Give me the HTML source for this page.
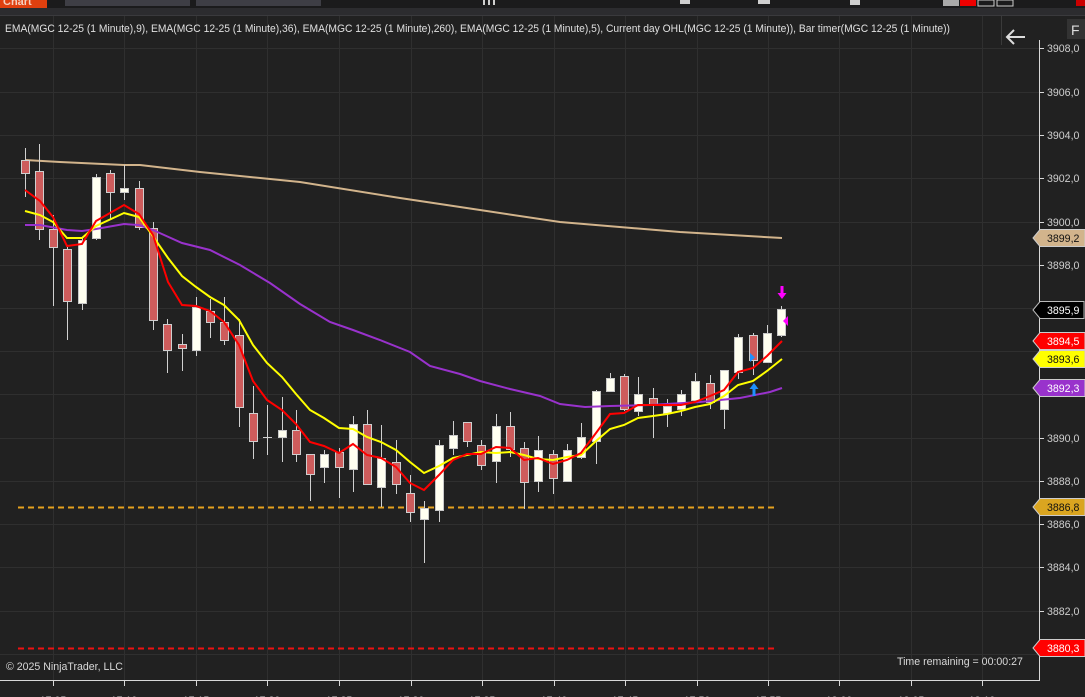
<!DOCTYPE html>
<html><head><meta charset="utf-8"><style>
html,body{margin:0;padding:0;background:#212121;overflow:hidden}
svg{display:block}
text{font-family:"Liberation Sans",sans-serif}
</style></head><body>
<svg width="1085" height="697" viewBox="0 0 1085 697" xmlns="http://www.w3.org/2000/svg">
<rect width="1085" height="697" fill="#212121"/>
<rect x="0" y="0" width="1085" height="8" fill="#1b1b1c"/>
<rect x="0" y="8" width="1085" height="7" fill="#2c2c2f"/>
<rect x="0" y="15" width="1085" height="1" fill="#3a3a3d"/>
<rect x="0" y="0" width="47" height="8" fill="#e0400f"/>
<text x="3" y="5" font-size="11" fill="#f4d0c0" font-weight="bold">Chart</text>
<rect x="65" y="0" width="125" height="6" fill="#3e3e45"/>
<rect x="196" y="0" width="125" height="6" fill="#3e3e45"/>
<g fill="#cfcfcf">
<rect x="483" y="0" width="2" height="5"/><rect x="488" y="0" width="2" height="5"/><rect x="493" y="0" width="2" height="5"/>
<rect x="680" y="0" width="10" height="4"/><rect x="758" y="0" width="12" height="4"/><rect x="850" y="0" width="10" height="5"/>
</g>
<rect x="943" y="0" width="16" height="6" fill="#aaa"/>
<rect x="960" y="0" width="16" height="6" fill="#e00"/>
<rect x="978" y="0" width="16" height="6" fill="none" stroke="#ccc"/>
<rect x="997" y="0" width="16" height="6" fill="none" stroke="#ccc"/>
<rect x="1076" y="0" width="9" height="6" fill="#c00"/>
<g stroke="#2f2f2f" stroke-width="1">
<line x1="53.5" y1="16" x2="53.5" y2="680"/><line x1="124.5" y1="16" x2="124.5" y2="680"/>
<line x1="196.5" y1="16" x2="196.5" y2="680"/><line x1="267.5" y1="16" x2="267.5" y2="680"/>
<line x1="339.5" y1="16" x2="339.5" y2="680"/><line x1="411.5" y1="16" x2="411.5" y2="680"/>
<line x1="482.5" y1="16" x2="482.5" y2="680"/><line x1="554.5" y1="16" x2="554.5" y2="680"/>
<line x1="625.5" y1="16" x2="625.5" y2="680"/><line x1="697.5" y1="16" x2="697.5" y2="680"/>
<line x1="768.5" y1="16" x2="768.5" y2="680"/><line x1="839.5" y1="16" x2="839.5" y2="680"/>
<line x1="911.5" y1="16" x2="911.5" y2="680"/><line x1="982.5" y1="16" x2="982.5" y2="680"/>
<line x1="0" y1="48.5" x2="1039" y2="48.5"/><line x1="0" y1="92.5" x2="1039" y2="92.5"/>
<line x1="0" y1="135.5" x2="1039" y2="135.5"/><line x1="0" y1="178.5" x2="1039" y2="178.5"/>
<line x1="0" y1="222.5" x2="1039" y2="222.5"/><line x1="0" y1="265.5" x2="1039" y2="265.5"/>
<line x1="0" y1="308.5" x2="1039" y2="308.5"/><line x1="0" y1="351.5" x2="1039" y2="351.5"/>
<line x1="0" y1="394.5" x2="1039" y2="394.5"/><line x1="0" y1="438.5" x2="1039" y2="438.5"/>
<line x1="0" y1="481.5" x2="1039" y2="481.5"/><line x1="0" y1="524.5" x2="1039" y2="524.5"/>
<line x1="0" y1="567.5" x2="1039" y2="567.5"/><line x1="0" y1="611.5" x2="1039" y2="611.5"/>
<line x1="0" y1="654.5" x2="1039" y2="654.5"/>
</g>
<line x1="1001.5" y1="16" x2="1001.5" y2="45" stroke="#3a3a3a"/>
<text x="5" y="32" font-size="10.6" fill="#e0e0e0" textLength="945" lengthAdjust="spacingAndGlyphs">EMA(MGC 12-25 (1 Minute),9), EMA(MGC 12-25 (1 Minute),36), EMA(MGC 12-25 (1 Minute),260), EMA(MGC 12-25 (1 Minute),5), Current day OHL(MGC 12-25 (1 Minute)), Bar timer(MGC 12-25 (1 Minute))</text>
<path d="M1007 37 H1025 M1014 30 L1007 37 L1014 44" stroke="#ddd" stroke-width="2" fill="none"/>
<rect x="1067" y="19" width="18" height="20" fill="#333"/>
<text x="1071" y="35" font-size="14" fill="#ddd">F</text>
<polyline fill="none" stroke="#d2b48c" stroke-width="2" points="25,160 60,162 124,165 140,165 200,172 300,182 400,198 480,210 560,222 680,232 782,238"/>
<line x1="18" y1="507.5" x2="776" y2="507.5" stroke="#e5a11e" stroke-width="2" stroke-dasharray="6,4"/>
<line x1="18" y1="648.5" x2="776" y2="648.5" stroke="#ee1111" stroke-width="2" stroke-dasharray="6,4"/>
<g stroke="#d0d0d0" stroke-width="1">
<g>
<line x1="25.5" y1="148" x2="25.5" y2="197"/><line x1="39.5" y1="144" x2="39.5" y2="240"/>
<line x1="53.5" y1="215" x2="53.5" y2="306"/><line x1="67.5" y1="247" x2="67.5" y2="340"/>
<line x1="82.5" y1="237" x2="82.5" y2="310"/><line x1="96.5" y1="174" x2="96.5" y2="240"/>
<line x1="110.5" y1="170" x2="110.5" y2="220"/><line x1="124.5" y1="165" x2="124.5" y2="200"/>
<line x1="139.5" y1="181" x2="139.5" y2="230"/><line x1="153.5" y1="222" x2="153.5" y2="330"/>
<line x1="167.5" y1="319" x2="167.5" y2="373"/><line x1="182.5" y1="334" x2="182.5" y2="371"/>
<line x1="196.5" y1="297" x2="196.5" y2="356"/><line x1="210.5" y1="299" x2="210.5" y2="338"/>
<line x1="224.5" y1="297" x2="224.5" y2="345"/><line x1="239.5" y1="319" x2="239.5" y2="427"/>
<line x1="253.5" y1="386" x2="253.5" y2="459"/><line x1="267.5" y1="405" x2="267.5" y2="455"/>
<line x1="282.5" y1="397" x2="282.5" y2="462"/><line x1="296.5" y1="410" x2="296.5" y2="462"/>
<line x1="310.5" y1="454" x2="310.5" y2="501"/><line x1="324.5" y1="450" x2="324.5" y2="483"/>
<line x1="339.5" y1="448" x2="339.5" y2="498"/><line x1="353.5" y1="416" x2="353.5" y2="492"/>
<line x1="367.5" y1="410" x2="367.5" y2="484"/><line x1="381.5" y1="425" x2="381.5" y2="507"/>
<line x1="396.5" y1="440" x2="396.5" y2="494"/><line x1="410.5" y1="475" x2="410.5" y2="522"/>
<line x1="424.5" y1="501" x2="424.5" y2="563"/><line x1="439.5" y1="440" x2="439.5" y2="522"/>
<line x1="453.5" y1="421" x2="453.5" y2="455"/><line x1="467.5" y1="422" x2="467.5" y2="447"/>
<line x1="481.5" y1="440" x2="481.5" y2="470"/><line x1="496.5" y1="414" x2="496.5" y2="483"/>
<line x1="510.5" y1="412" x2="510.5" y2="457"/><line x1="524.5" y1="442" x2="524.5" y2="509"/>
<line x1="538.5" y1="436" x2="538.5" y2="492"/><line x1="553.5" y1="450" x2="553.5" y2="494"/>
<line x1="567.5" y1="444" x2="567.5" y2="481"/><line x1="581.5" y1="423" x2="581.5" y2="459"/>
<line x1="596.5" y1="390" x2="596.5" y2="464"/><line x1="610.5" y1="373" x2="610.5" y2="391"/>
<line x1="624.5" y1="374" x2="624.5" y2="411"/><line x1="638.5" y1="377" x2="638.5" y2="416"/>
<line x1="653.5" y1="388" x2="653.5" y2="438"/><line x1="667.5" y1="399" x2="667.5" y2="427"/>
<line x1="681.5" y1="390" x2="681.5" y2="416"/><line x1="695.5" y1="373" x2="695.5" y2="400"/>
<line x1="710.5" y1="375" x2="710.5" y2="409"/><line x1="724.5" y1="370" x2="724.5" y2="429"/>
<line x1="738.5" y1="334" x2="738.5" y2="379"/><line x1="753.5" y1="333" x2="753.5" y2="375"/>
<line x1="767.5" y1="325" x2="767.5" y2="362"/><line x1="781.5" y1="306" x2="781.5" y2="337"/>
</g>
<g fill="#cd5c5c" stroke="#cfcfcf">
<rect x="21.5" y="160.5" width="8" height="13"/><rect x="35.5" y="171.5" width="8" height="58"/>
<rect x="49.5" y="229.5" width="8" height="18"/><rect x="63.5" y="249.5" width="8" height="52"/>
<rect x="106.5" y="173.5" width="8" height="19"/><rect x="135.5" y="188.5" width="8" height="39"/>
<rect x="149.5" y="228.5" width="8" height="92"/><rect x="163.5" y="324.5" width="8" height="26"/>
<rect x="178.5" y="344.5" width="8" height="4"/><rect x="206.5" y="311.5" width="8" height="11"/>
<rect x="220.5" y="322.5" width="8" height="18"/><rect x="235.5" y="335.5" width="8" height="72"/>
<rect x="249.5" y="413.5" width="8" height="28"/><rect x="292.5" y="430.5" width="8" height="24"/>
<rect x="306.5" y="454.5" width="8" height="20"/><rect x="335.5" y="452.5" width="8" height="15"/>
<rect x="363.5" y="424.5" width="8" height="60"/><rect x="392.5" y="462.5" width="8" height="22"/>
<rect x="406.5" y="493.5" width="8" height="19"/><rect x="463.5" y="422.5" width="8" height="19"/>
<rect x="477.5" y="445.5" width="8" height="20"/><rect x="506.5" y="426.5" width="8" height="23"/>
<rect x="520.5" y="448.5" width="8" height="34"/><rect x="549.5" y="454.5" width="8" height="24"/>
<rect x="620.5" y="376.5" width="8" height="33"/><rect x="649.5" y="398.5" width="8" height="7"/>
<rect x="706.5" y="383.5" width="8" height="19"/><rect x="749.5" y="335.5" width="8" height="25"/>
</g>
<g fill="#fffff0" stroke="#c8c8c8">
<rect x="78.5" y="240.5" width="8" height="63"/><rect x="92.5" y="177.5" width="8" height="61"/>
<rect x="120.5" y="188.5" width="8" height="4"/><rect x="192.5" y="307.5" width="8" height="43"/>
<rect x="278.5" y="430.5" width="8" height="7"/><rect x="320.5" y="454.5" width="8" height="13"/>
<rect x="349.5" y="424.5" width="8" height="45"/><rect x="377.5" y="458.5" width="8" height="29"/>
<rect x="420.5" y="508.5" width="8" height="11"/><rect x="435.5" y="445.5" width="8" height="65"/>
<rect x="449.5" y="435.5" width="8" height="13"/><rect x="492.5" y="426.5" width="8" height="35"/>
<rect x="534.5" y="450.5" width="8" height="31"/><rect x="563.5" y="450.5" width="8" height="31"/>
<rect x="577.5" y="437.5" width="8" height="20"/><rect x="592.5" y="391.5" width="8" height="50"/>
<rect x="606.5" y="378.5" width="8" height="13"/><rect x="634.5" y="394.5" width="8" height="17"/>
<rect x="663.5" y="406.5" width="8" height="7"/><rect x="677.5" y="394.5" width="8" height="15"/>
<rect x="691.5" y="381.5" width="8" height="19"/><rect x="720.5" y="370.5" width="8" height="39"/>
<rect x="734.5" y="337.5" width="8" height="35"/><rect x="763.5" y="333.5" width="8" height="29"/>
<rect x="777.5" y="309.5" width="8" height="26"/>
</g>
<line x1="263" y1="437.5" x2="272" y2="437.5"/>
</g>
<polyline fill="none" stroke="#9932cc" stroke-width="2" points="25,225 40,225 67,230 82,231 96,229 124,224 139,225 153,230 182,243 210,250 240,265 270,283 300,304 330,322 353,330 380,340 410,352 430,366 460,374 480,381 510,389 540,396 560,404 585,407 610,406 650,405 700,402 740,398 770,392 782,388"/>
<polyline fill="none" stroke="#ffff00" stroke-width="2" points="25,211 40,215 53,222 67,238 82,238 96,226 124,213 139,217 150,232 168,258 182,276 196,287 210,297 224,305 239,320 253,345 267,363 282,377 296,394 310,410 324,418 339,428 353,429 367,437 381,442 396,450 410,462 424,473 439,466 453,458 467,455 481,452 496,453 510,452 524,455 538,459 553,460 567,457 581,455 596,441 610,429 624,425 638,418 653,416 667,414 681,411 695,407 710,404 724,396 738,385 753,381 767,371 782,359"/>
<polyline fill="none" stroke="#ff0000" stroke-width="2" points="25,190 40,201 53,217 67,246 82,244 96,221 124,205 139,214 153,235 168,282 182,305 196,306 210,311 224,322 239,345 253,381 267,400 282,410 296,424 310,442 324,446 339,453 353,444 367,455 381,458 396,467 410,483 424,490 439,475 453,460 467,454 481,454 496,447 510,448 524,460 538,458 553,464 567,460 581,453 596,433 610,414 624,413 638,405 653,405 667,405 681,405 695,402 710,396 724,390 738,372 753,368 767,356 782,341"/>
<path d="M780.5 286 h3 v7 h3 l-4.5 6 l-4.5 -6 h3 z" fill="#ff00ff"/>
<path d="M788 316 v10 l-5 -5 z" fill="#ff00ff"/>
<path d="M752.5 396 v-7 h-3 l4.5 -6 l4.5 6 h-3 v7 z" fill="#1e90ff"/>
<path d="M750 353 l5 4.5 l-5 4.5 z" fill="#1e90ff"/>
<line x1="1039.5" y1="40" x2="1039.5" y2="681" stroke="#d8d8d8"/>
<line x1="0" y1="680.5" x2="1040" y2="680.5" stroke="#d8d8d8"/>
<g stroke="#d8d8d8">
<line x1="1040" y1="48.5" x2="1044" y2="48.5"/><line x1="1040" y1="92.5" x2="1044" y2="92.5"/>
<line x1="1040" y1="135.5" x2="1044" y2="135.5"/><line x1="1040" y1="178.5" x2="1044" y2="178.5"/>
<line x1="1040" y1="222.5" x2="1044" y2="222.5"/><line x1="1040" y1="265.5" x2="1044" y2="265.5"/>
<line x1="1040" y1="438.5" x2="1044" y2="438.5"/><line x1="1040" y1="481.5" x2="1044" y2="481.5"/>
<line x1="1040" y1="524.5" x2="1044" y2="524.5"/><line x1="1040" y1="567.5" x2="1044" y2="567.5"/>
<line x1="1040" y1="611.5" x2="1044" y2="611.5"/>
<line x1="53.5" y1="681" x2="53.5" y2="686"/><line x1="124.5" y1="681" x2="124.5" y2="686"/>
<line x1="196.5" y1="681" x2="196.5" y2="686"/><line x1="267.5" y1="681" x2="267.5" y2="686"/>
<line x1="339.5" y1="681" x2="339.5" y2="686"/><line x1="411.5" y1="681" x2="411.5" y2="686"/>
<line x1="482.5" y1="681" x2="482.5" y2="686"/><line x1="554.5" y1="681" x2="554.5" y2="686"/>
<line x1="625.5" y1="681" x2="625.5" y2="686"/><line x1="697.5" y1="681" x2="697.5" y2="686"/>
<line x1="768.5" y1="681" x2="768.5" y2="686"/><line x1="839.5" y1="681" x2="839.5" y2="686"/>
<line x1="911.5" y1="681" x2="911.5" y2="686"/><line x1="982.5" y1="681" x2="982.5" y2="686"/>
</g>
<g font-size="10.6" fill="#cfcfcf">
<text x="1047" y="52">3908,0</text><text x="1047" y="96">3906,0</text>
<text x="1047" y="139">3904,0</text><text x="1047" y="182">3902,0</text>
<text x="1047" y="226">3900,0</text><text x="1047" y="269">3898,0</text>
<text x="1047" y="442">3890,0</text><text x="1047" y="485">3888,0</text>
<text x="1047" y="528">3886,0</text><text x="1047" y="571">3884,0</text>
<text x="1047" y="615">3882,0</text>
<g text-anchor="middle">
<text x="53" y="704">17:05</text><text x="124" y="704">17:10</text><text x="196" y="704">17:15</text>
<text x="267" y="704">17:20</text><text x="339" y="704">17:25</text><text x="411" y="704">17:30</text>
<text x="482" y="704">17:35</text><text x="554" y="704">17:40</text><text x="625" y="704">17:45</text>
<text x="697" y="704">17:50</text><text x="768" y="704">17:55</text><text x="839" y="704">18:00</text>
<text x="911" y="704">18:05</text><text x="982" y="704">18:10</text>
</g>
</g>
<g font-size="10.6">
<path d="M1033 238 l7 -8.5 h45 v17 h-45 z" fill="#d2b48c" stroke="#ccc"/><text x="1047" y="242" fill="#111">3899,2</text>
<path d="M1033 310 l7 -8.5 h44 v17 h-44 z" fill="#000" stroke="#bbb"/><text x="1047" y="314" fill="#fff">3895,9</text>
<path d="M1033 341 l7 -8.5 h45 v17 h-45 z" fill="#ff0000" stroke="#ccc"/><text x="1047" y="345" fill="#fff">3894,5</text>
<path d="M1033 359 l7 -8.5 h45 v17 h-45 z" fill="#ffff00" stroke="#ccc"/><text x="1047" y="363" fill="#111">3893,6</text>
<path d="M1033 388 l7 -8.5 h45 v17 h-45 z" fill="#9932cc" stroke="#ccc"/><text x="1047" y="392" fill="#fff">3892,3</text>
<path d="M1033 507 l7 -8.5 h45 v17 h-45 z" fill="#daa520" stroke="#ccc"/><text x="1047" y="511" fill="#111">3886,8</text>
<path d="M1033 648 l7 -8.5 h45 v17 h-45 z" fill="#ff0000" stroke="#ccc"/><text x="1047" y="652" fill="#fff">3880,3</text>
</g>
<text x="6" y="670" font-size="10.6" fill="#d8d8d8">© 2025 NinjaTrader, LLC</text>
<text x="897" y="665" font-size="10.6" fill="#d8d8d8">Time remaining = 00:00:27</text>
</svg>
</body></html>
